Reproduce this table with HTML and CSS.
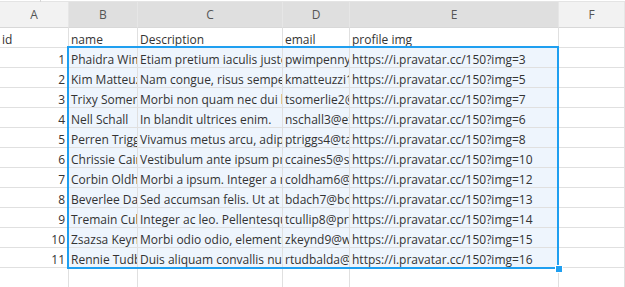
FILE: index.html
```html
<!DOCTYPE html>
<html>
<head>
<meta charset="utf-8">
<link rel="stylesheet" href="styles.css">
</head>
<body>
<div class="sheet">
  <div class="topstrip"><span class="tick"></span></div>
  <div class="grid">
    <div class="hd">A</div><div class="hd sel">B</div><div class="hd sel">C</div><div class="hd sel">D</div><div class="hd sel">E</div><div class="hd">F</div>

    <div class="c">id</div><div class="c">name</div><div class="c">Description</div><div class="c">email</div><div class="c">profile img</div><div class="c"></div>

    <div class="c num">1</div><div class="c s">Phaidra Wimpenny</div><div class="c s">Etiam pretium iaculis justo.</div><div class="c s">pwimpenny0@example.com</div><div class="c s">https://i.pravatar.cc/150?img=3</div><div class="c"></div>
    <div class="c num">2</div><div class="c s">Kim Matteuzzi</div><div class="c s">Nam congue, risus semper porta volutpat.</div><div class="c s">kmatteuzzi1@example.com</div><div class="c s">https://i.pravatar.cc/150?img=5</div><div class="c"></div>
    <div class="c num">3</div><div class="c s">Trixy Somerlie</div><div class="c s">Morbi non quam nec dui luctus rutrum.</div><div class="c s">tsomerlie2@example.com</div><div class="c s">https://i.pravatar.cc/150?img=7</div><div class="c"></div>
    <div class="c num">4</div><div class="c s">Nell Schall</div><div class="c s">In blandit ultrices enim.</div><div class="c s">nschall3@example.com</div><div class="c s">https://i.pravatar.cc/150?img=6</div><div class="c"></div>
    <div class="c num">5</div><div class="c s">Perren Triggs</div><div class="c s">Vivamus metus arcu, adipiscing molestie.</div><div class="c s">ptriggs4@taobao.com</div><div class="c s">https://i.pravatar.cc/150?img=8</div><div class="c"></div>
    <div class="c num">6</div><div class="c s">Chrissie Caines</div><div class="c s">Vestibulum ante ipsum primis in faucibus.</div><div class="c s">ccaines5@sina.com</div><div class="c s">https://i.pravatar.cc/150?img=10</div><div class="c"></div>
    <div class="c num">7</div><div class="c s">Corbin Oldham</div><div class="c s">Morbi a ipsum. Integer a nibh.</div><div class="c s">coldham6@example.com</div><div class="c s">https://i.pravatar.cc/150?img=12</div><div class="c"></div>
    <div class="c num">8</div><div class="c s">Beverlee Dach</div><div class="c s">Sed accumsan felis. Ut at dolor.</div><div class="c s">bdach7@boston.com</div><div class="c s">https://i.pravatar.cc/150?img=13</div><div class="c"></div>
    <div class="c num">9</div><div class="c s">Tremain Cullip</div><div class="c s">Integer ac leo. Pellentesque ultrices.</div><div class="c s">tcullip8@prweb.com</div><div class="c s">https://i.pravatar.cc/150?img=14</div><div class="c"></div>
    <div class="c num">10</div><div class="c s">Zsazsa Keynd</div><div class="c s">Morbi odio odio, elementum eu.</div><div class="c s">zkeynd9@wiley.com</div><div class="c s">https://i.pravatar.cc/150?img=15</div><div class="c"></div>
    <div class="c num">11</div><div class="c s">Rennie Tudbald</div><div class="c s">Duis aliquam convallis nunc.</div><div class="c s">rtudbalda@example.com</div><div class="c s">https://i.pravatar.cc/150?img=16</div><div class="c"></div>

    <div class="c"></div><div class="c"></div><div class="c"></div><div class="c"></div><div class="c"></div><div class="c"></div>
  </div>
  <div class="selection"><span class="handle"></span></div>
</div>
</body>
</html>
```
FILE: styles.css
```css
html, body {
  margin: 0;
  padding: 0;
  background: #ffffff;
  overflow: hidden;
}
.sheet {
  position: relative;
  width: 625px;
  height: 287px;
  font-family: "Open Sans", "Noto Sans", sans-serif;
  color: #333333;
}
.topstrip {
  height: 2px;
  box-sizing: border-box;
  border-bottom: 1px solid #e4e4e4;
  position: relative;
}
.tick {
  position: absolute;
  left: 40px;
  top: 0;
  width: 1px;
  height: 2px;
  background: #d6d6d6;
}
.grid {
  display: grid;
  grid-template-columns: 69px 69px 145px 67px 209px 1fr;
  grid-template-rows: 26px;
  grid-auto-rows: 20px;
}
.grid > div {
  box-sizing: border-box;
  border-right: 1px solid #e0e0e0;
  border-bottom: 1px solid #e0e0e0;
  overflow: hidden;
  white-space: nowrap;
}
.hd {
  background: #f2f2f2;
  color: #555555;
  font-size: 12px;
  line-height: 25px;
  text-align: center;
  border-right-color: #e6e6e6 !important;
  border-bottom-color: #d8d8d8 !important;
}
.hd.sel {
  background: #dfdfdf;
}
.c {
  font-size: 12px;
  line-height: 19px;
  padding: 2px 3px 0 2px;
}
.c.s {
  background: #eef5fd;
}
.num {
  text-align: right;
}
.selection {
  position: absolute;
  left: 67px;
  top: 46px;
  width: 492px;
  height: 223px;
  box-sizing: border-box;
  border: 2px solid #1f9ff0;
  pointer-events: none;
}
.handle {
  position: absolute;
  right: -5px;
  bottom: -5px;
  width: 6px;
  height: 6px;
  background: #1f9ff0;
  border: 1px solid #ffffff;
  box-sizing: content-box;
  margin: -1px;
}
```
